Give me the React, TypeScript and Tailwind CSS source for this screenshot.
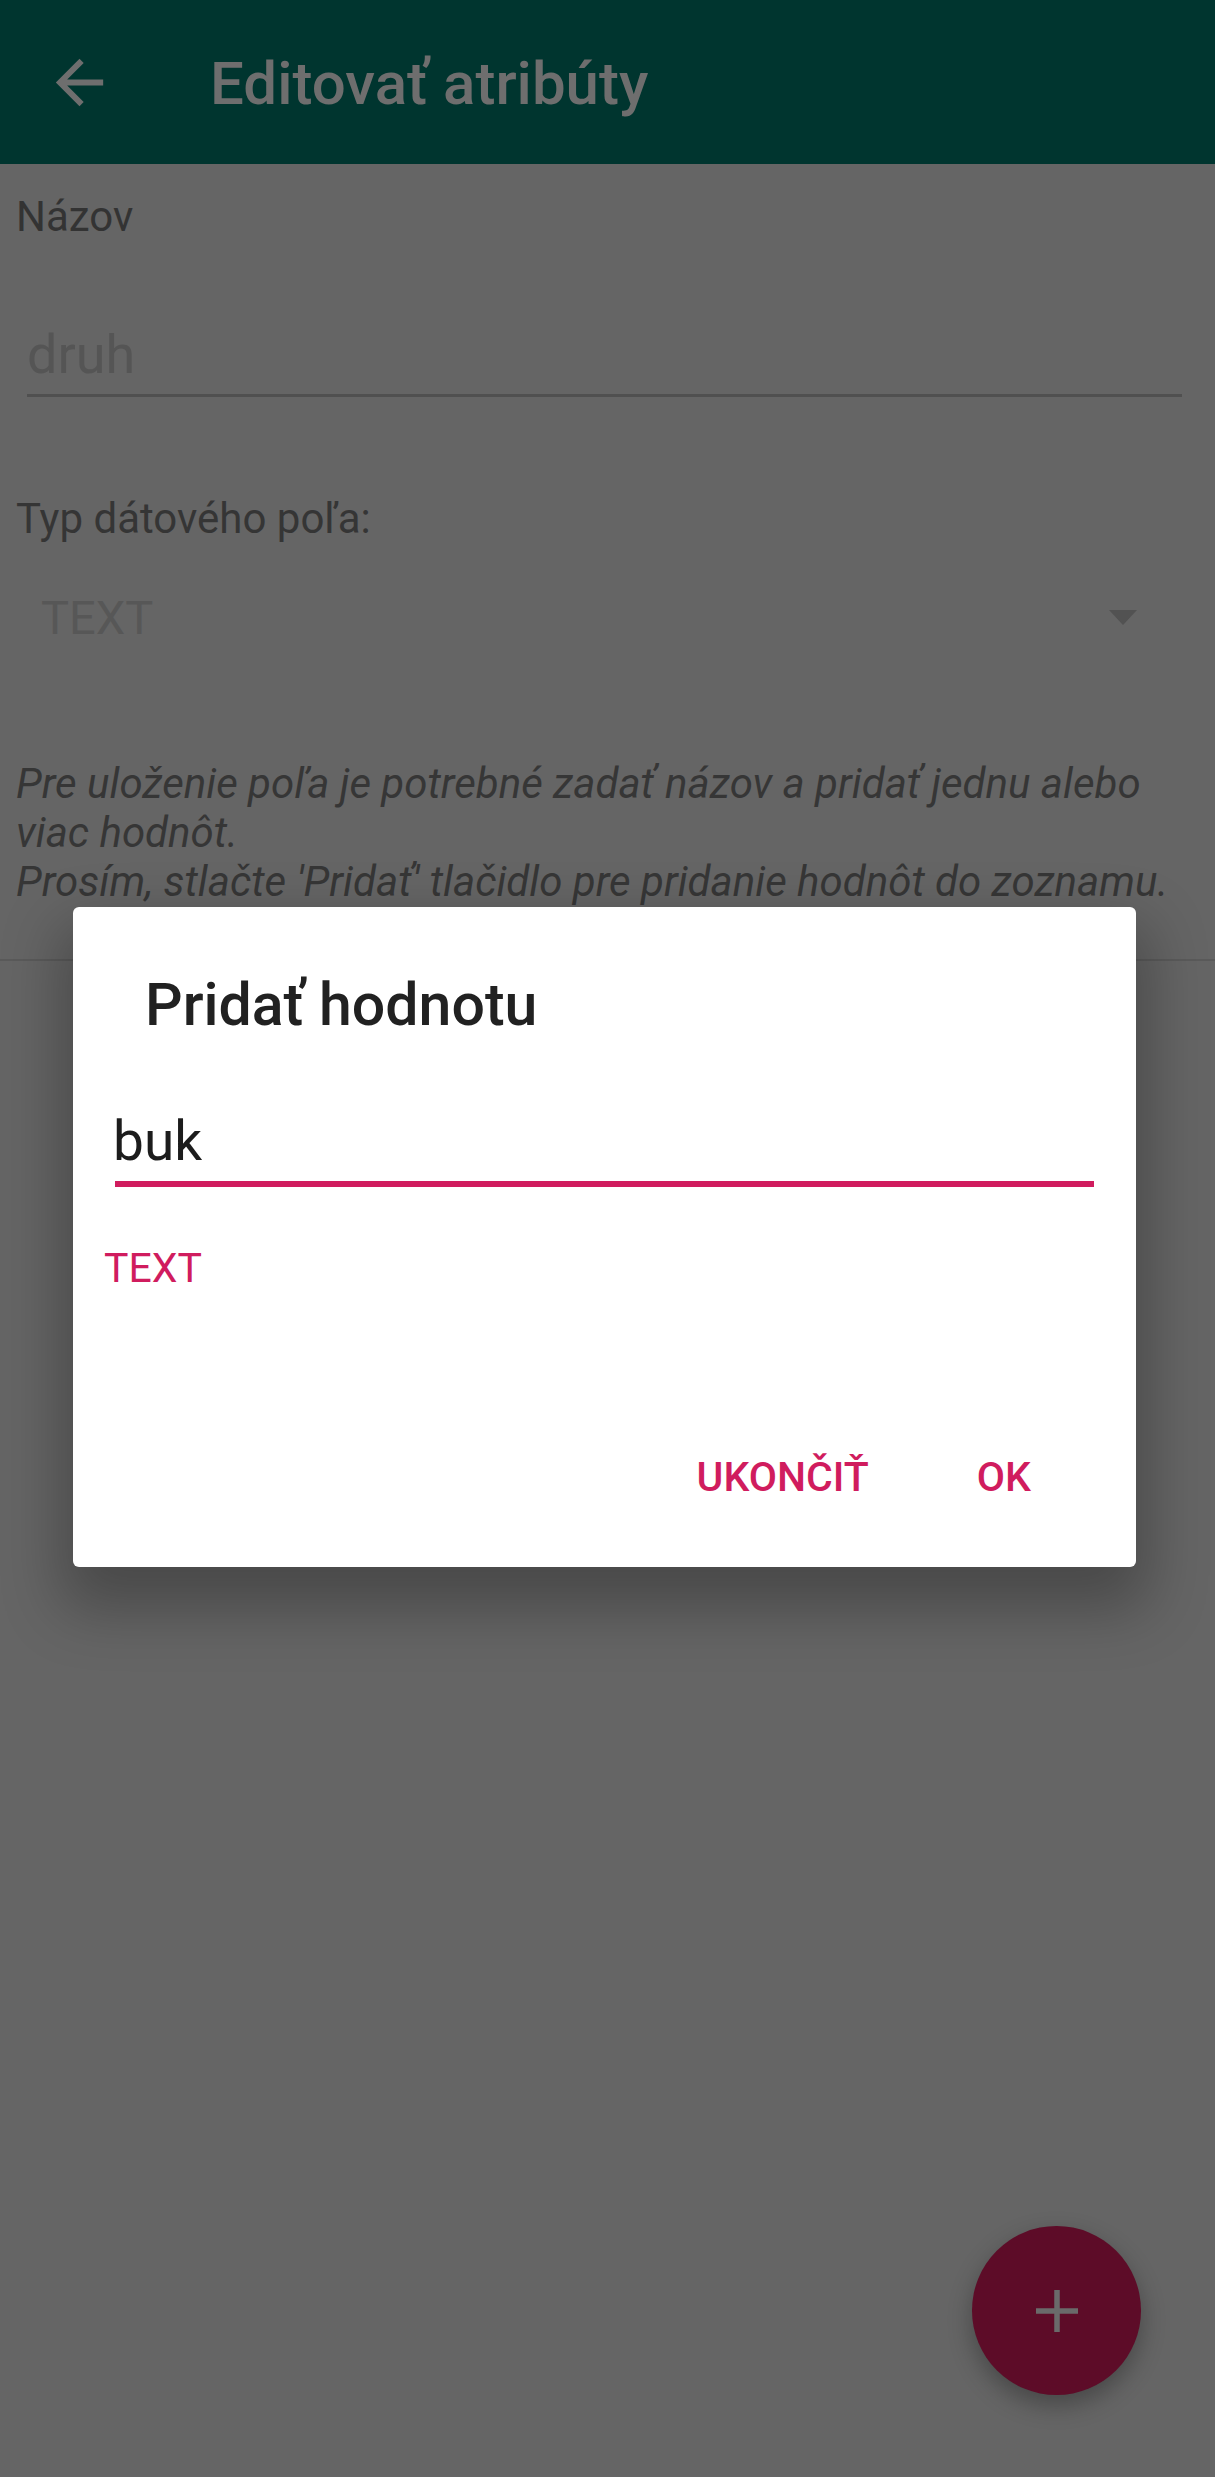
const accent = "text-[#d01c5e]";

function BackArrow() {
  return (
    <svg viewBox="0 0 24 24" className="w-[71px] h-[71px] fill-[#6e6e6e]">
      <path d="M20 11H7.83l5.59-5.59L12 4l-8 8 8 8 1.41-1.41L7.83 13H20v-2z" />
    </svg>
  );
}

function AddValueDialog() {
  return (
    <div className="absolute left-[73px] top-[907px] w-[1063px] rounded-[6px] bg-white shadow-[0_30px_60px_12px_rgba(0,0,0,0.28)]">
      <h2 className="pt-[63px] pl-[72px] text-[59px] leading-[69px] font-medium text-[#212121]">
        Pridať hodnotu
      </h2>

      <div className="mt-[71px] mx-[42px]">
        <div className="text-[55px] leading-[62px] text-[#1c1c1c] -ml-[2px]">buk</div>
        <div className="mt-[9px] h-[6px] bg-[#d01c5e]" />
      </div>

      <div className={`mt-[57px] pl-[31px] text-[41px] leading-[48px] ${accent}`}>TEXT</div>

      <div className="mt-[161px] pb-[66px] pr-[105px] flex justify-end gap-[108px] text-[41px] leading-[48px] font-medium">
        <span className={accent}>UKONČIŤ</span>
        <span className={accent}>OK</span>
      </div>
    </div>
  );
}

export default function App() {
  return (
    <div className="relative w-[1215px] h-[2477px] overflow-hidden bg-[#656565] font-[Roboto,'Liberation_Sans',sans-serif]">
      {/* toolbar */}
      <header className="h-[164px] bg-[#00352f] flex items-center pl-[44px]">
        <BackArrow />
        <h1 className="ml-[95px] pt-[4px] text-[60px] leading-[68px] font-medium text-[#6e6e6e]">
          Editovať atribúty
        </h1>
      </header>

      <div className="pl-[14px]">
        <p className="mt-[29px] pl-[2px] text-[42px] leading-[47px] text-[#333333]">Názov</p>

        <div className="mt-[84px] ml-[13px] w-[1155px]">
          <div className="text-[54px] leading-[61px] text-[#555555]">druh</div>
          <div className="mt-[9px] h-[3px] bg-[#505050]" />
        </div>

        <p className="mt-[98px] pl-[2px] text-[42px] leading-[47px] text-[#353535]">Typ dátového poľa:</p>

        <div className="mt-[48px] flex items-center justify-between pl-[27px] pr-[78px]">
          <span className="text-[47px] leading-[55px] text-[#575757]">TEXT</span>
          <svg viewBox="0 0 28 15" className="w-[28px] h-[15px] fill-[#525252]">
            <path d="M0 0h28L14 15z" />
          </svg>
        </div>

        <div className="mt-[114px] pl-[2px] italic text-[42px] leading-[49px] text-[#363636]">
          <p className="whitespace-nowrap">Pre uloženie poľa je potrebné zadať názov a pridať jednu alebo</p>
          <p className="whitespace-nowrap">viac hodnôt.</p>
          <p className="whitespace-nowrap">Prosím, stlačte 'Pridať' tlačidlo pre pridanie hodnôt do zoznamu.</p>
        </div>
      </div>

      <div className="mt-[53px] h-[2px] bg-[#5a5a5a]" />

      <AddValueDialog />

      {/* floating add button */}
      <button className="absolute right-[74px] bottom-[82px] w-[169px] h-[169px] rounded-full bg-[#5d0c28] shadow-[0_10px_24px_rgba(0,0,0,0.3)] flex items-center justify-center">
        <svg viewBox="0 0 42 42" className="w-[42px] h-[42px] fill-[#6a6a6a]">
          <path d="M18.25 0h5.5v18.25H42v5.5H23.75V42h-5.5V23.75H0v-5.5h18.25z" />
        </svg>
      </button>
    </div>
  );
}
